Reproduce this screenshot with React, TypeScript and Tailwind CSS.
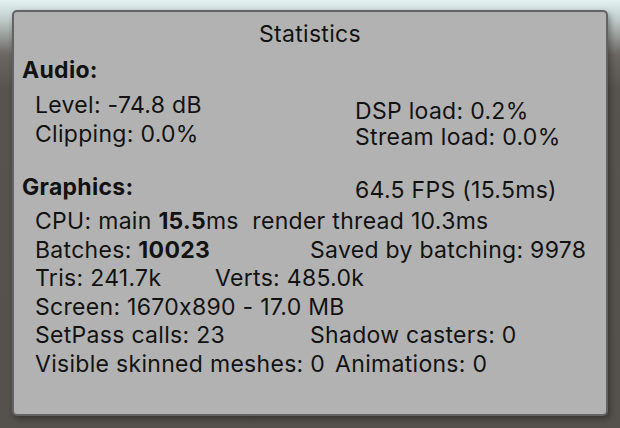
import React from "react";

const Stat = ({ children, w }: { children: React.ReactNode; w?: string }) => (
  <span className={`whitespace-pre ${w ?? ""}`}>{children}</span>
);

const App = () => {
  return (
    <div className="w-[620px] h-[428px] bg-[linear-gradient(to_bottom,#e2f1f1_0px,#c4d0cf_18px,#6a6661_55px,#57534e_90px,#55514c_100%)] pt-[10px] pl-[12px] font-['Inter','Noto_Sans',sans-serif] [font-feature-settings:'calt'_0] text-[#121212]">
      <div className="w-[596px] h-[406px] rounded-[5px] border-2 border-[#636363] bg-[#b2b2b2] shadow-[2px_3px_6px_rgba(0,0,0,0.35)] text-[23px] tracking-[0.3px] leading-[29px]">
        <div className="pt-[8px] text-center">Statistics</div>

        {/* audio */}
        <div className="mt-[7px] pl-[8px] font-bold">Audio:</div>
        <div className="flex mt-[6px]">
          <div className="w-[341px] pl-[21px] flex flex-col">
            <Stat>Level: -74.8 dB</Stat>
            <Stat>Clipping: 0.0%</Stat>
          </div>
          <div className="flex flex-col pt-[7px] leading-[26px]">
            <Stat>DSP load: 0.2%</Stat>
            <Stat>Stream load: 0.0%</Stat>
          </div>
        </div>

        {/* graphics */}
        <div className="flex mt-[23px]">
          <div className="w-[341px] pl-[8px] font-bold">Graphics:</div>
          <div className="pt-[3px]">64.5 FPS (15.5ms)</div>
        </div>
        <div className="flex flex-col pl-[21px] mt-[2px] leading-[28.6px]">
          <div>
            <Stat>
              CPU: main <b>15.5</b>ms  render thread 10.3ms
            </Stat>
          </div>
          <div className="flex">
            <Stat w="w-[275px]">
              Batches: <b>10023</b>
            </Stat>
            <Stat>Saved by batching: 9978</Stat>
          </div>
          <div className="flex">
            <Stat w="w-[180px]">Tris: 241.7k</Stat>
            <Stat>Verts: 485.0k</Stat>
          </div>
          <div>
            <Stat>Screen: 1670x890 - 17.0 MB</Stat>
          </div>
          <div className="flex">
            <Stat w="w-[275px]">SetPass calls: 23</Stat>
            <Stat>Shadow casters: 0</Stat>
          </div>
          <div className="flex">
            <Stat>Visible skinned meshes: 0</Stat>
            <Stat w="ml-[10px]">Animations: 0</Stat>
          </div>
        </div>
      </div>
    </div>
  );
};

export default App;
